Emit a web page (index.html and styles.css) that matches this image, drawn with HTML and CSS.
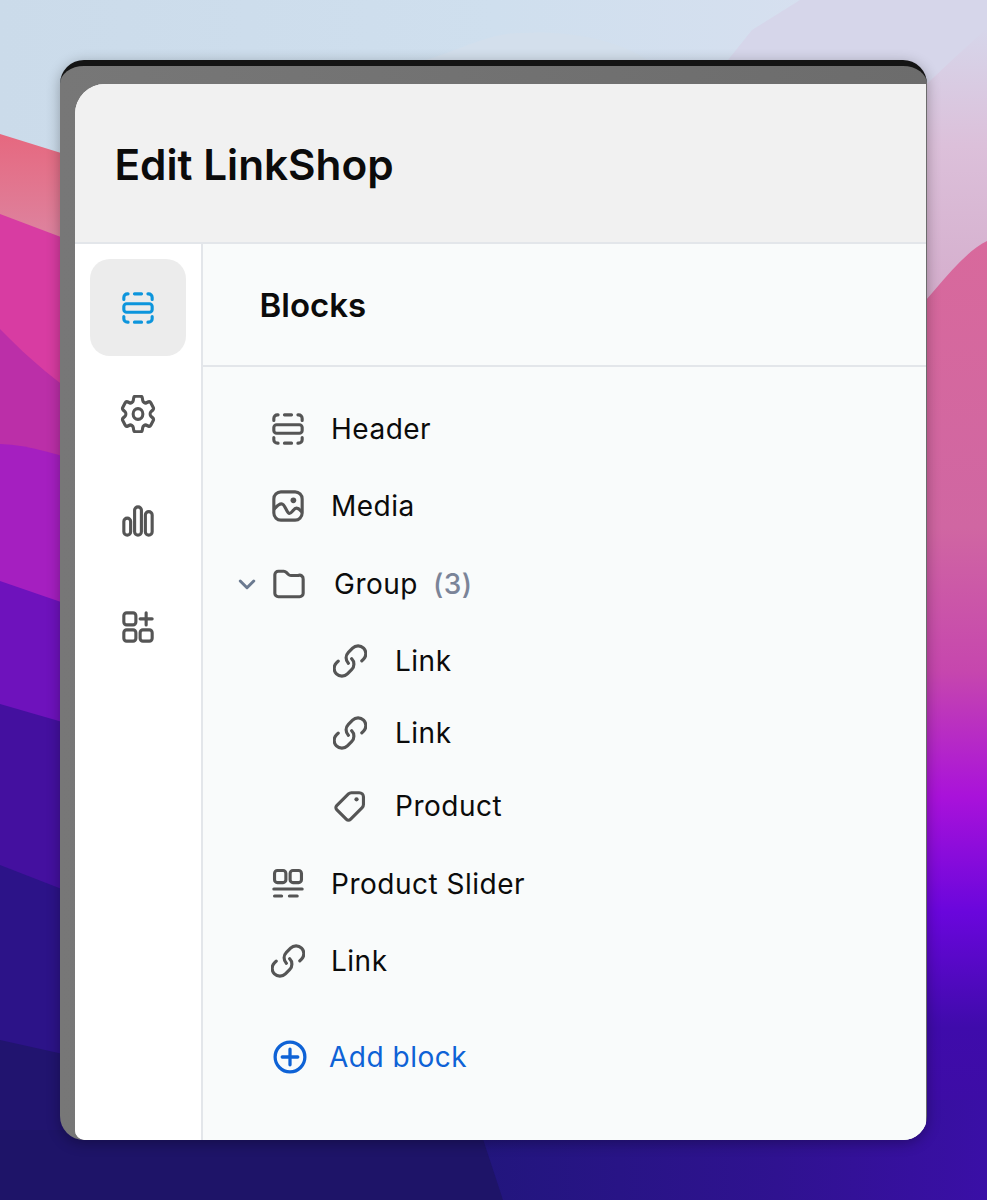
FILE: index.html
```html
<!DOCTYPE html>
<html lang="en">
<head>
  <meta charset="UTF-8" />
  <title>Edit LinkShop</title>
  <link rel="stylesheet" href="styles.css">
</head>
<body>
  <svg class="wallpaper" viewBox="0 0 987 1200" preserveAspectRatio="none" aria-hidden="true">
    <defs>
      <linearGradient id="sky" x1="0" y1="0" x2="1" y2="0">
        <stop offset="0" stop-color="#cbdbea" />
        <stop offset="0.5" stop-color="#cfdfee" />
        <stop offset="1" stop-color="#dae0f0" />
      </linearGradient>
      <linearGradient id="pale" x1="0" y1="0" x2="0" y2="1">
        <stop offset="0" stop-color="#d6d6ea" />
        <stop offset="0.3" stop-color="#dcc0da" />
        <stop offset="1" stop-color="#cf9fc2" />
      </linearGradient>
      <linearGradient id="pink" gradientUnits="userSpaceOnUse" x1="0" y1="240" x2="0" y2="1200">
        <stop offset="0" stop-color="#d8699c" />
        <stop offset="0.3" stop-color="#d066a2" />
        <stop offset="0.45" stop-color="#c646ae" />
        <stop offset="0.58" stop-color="#a912da" />
        <stop offset="0.7" stop-color="#6a06dc" />
        <stop offset="0.82" stop-color="#3f0bab" />
        <stop offset="1" stop-color="#3a0e9e" />
      </linearGradient>
      <linearGradient id="salmon" gradientUnits="userSpaceOnUse" x1="0" y1="134" x2="0" y2="240">
        <stop offset="0" stop-color="#e6687f" />
        <stop offset="1" stop-color="#dd84a0" />
      </linearGradient>
      <linearGradient id="floor" x1="0" y1="0" x2="1" y2="0">
        <stop offset="0" stop-color="#21167c" />
        <stop offset="0.6" stop-color="#2f1290" />
        <stop offset="1" stop-color="#3a0fa6" />
      </linearGradient>
    </defs>
    <rect width="987" height="1200" fill="url(#sky)" />
    <path d="M420 62 C460 50 490 33 520 33 C570 30 620 40 650 62 Z" fill="#d3dfec" />
    <path d="M720 70 L752 30 L800 0 H987 V400 H720 Z" fill="#d6d6ea" />
    <path d="M915 95 L950 62 L987 28 V420 H915 Z" fill="url(#pale)" />
    <path d="M900 330 C930 298 960 254 987 241 V1200 H500 Z" fill="url(#pink)" />
    <path d="M462 1140 L503 1200 H987 V1100 H470 Z" fill="url(#floor)" />

    <path d="M0 134 L90 162 V1200 H0 Z" fill="url(#salmon)" />
    <path d="M0 214 L90 248 V1200 H0 Z" fill="#d83ca2" />
    <path d="M0 329 C30 360 60 385 90 404 V1200 H0 Z" fill="#bb2fa8" />
    <path d="M0 444 C30 445 60 455 90 465 V1200 H0 Z" fill="#a51fc0" />
    <path d="M0 581 L90 612 V1200 H0 Z" fill="#6e12bc" />
    <path d="M0 704 L90 730 V1200 H0 Z" fill="#44109f" />
    <path d="M0 865 L90 900 V1200 H0 Z" fill="#2c1388" />
    <path d="M0 1040 L90 1060 V1200 H0 Z" fill="#21146f" />
    <path d="M0 1130 H480 L503 1200 H0 Z" fill="#1e1468" />
  </svg>

  <div class="window">
    <div class="panel">
      <header class="topbar">
        <h1>Edit LinkShop</h1>
      </header>
      <div class="body">
        <nav class="rail">
          <a class="rail-btn active">
            <svg class="icon" viewBox="0 0 24 24"><use href="#i-header" /></svg>
          </a>
          <a class="rail-btn">
            <svg class="icon gear" viewBox="2 2.400 20 19.200" preserveAspectRatio="none">
              <path d="M9.594 3.940c.09-.542.56-.94 1.110-.94h2.593c.55 0 1.020.398 1.110.94l.213 1.281c.063.374.313.686.645.870.074.040.147.083.22.127.325.196.72.257 1.075.124l1.217-.456a1.125 1.125 0 0 1 1.370.49l1.296 2.247a1.125 1.125 0 0 1-.26 1.431l-1.003.827c-.293.241-.438.613-.43.992a7.723 7.723 0 0 1 0 .255c-.008.378.137.75.43.991l1.004.827c.424.35.534.955.26 1.430l-1.298 2.247a1.125 1.125 0 0 1-1.369.491l-1.217-.456c-.355-.133-.75-.072-1.076.124a6.470 6.470 0 0 1-.22.128c-.331.183-.581.495-.644.869l-.213 1.281c-.09.543-.56.94-1.110.94h-2.594c-.55 0-1.019-.398-1.110-.94l-.213-1.281c-.062-.374-.312-.686-.644-.87a6.520 6.520 0 0 1-.22-.127c-.325-.196-.72-.257-1.076-.124l-1.217.456a1.125 1.125 0 0 1-1.369-.49l-1.297-2.247a1.125 1.125 0 0 1 .26-1.431l1.004-.827c.292-.24.437-.613.43-.991a6.932 6.932 0 0 1 0-.255c.007-.38-.138-.751-.43-.992l-1.004-.827a1.125 1.125 0 0 1-.26-1.430l1.297-2.247a1.125 1.125 0 0 1 1.370-.491l1.216.456c.356.133.751.072 1.076-.124.072-.044.146-.086.22-.128.332-.183.582-.495.644-.869l.214-1.280Z" />
              <circle cx="12" cy="12" r="2.700" />
            </svg>
          </a>
          <a class="rail-btn">
            <svg class="icon" viewBox="0 0 24 24"><use href="#i-bars" /></svg>
          </a>
          <a class="rail-btn">
            <svg class="icon" viewBox="0 0 24 24"><use href="#i-apps" /></svg>
          </a>
        </nav>
        <main class="content">
          <div class="content-head">
            <h2>Blocks</h2>
          </div>
          <ul class="blocks">
            <li class="block">
              <svg class="icon" viewBox="0 0 24 24"><use href="#i-header" /></svg>
              <span>Header</span>
            </li>
            <li class="block">
              <svg class="icon" viewBox="0 0 24 24"><use href="#i-media" /></svg>
              <span>Media</span>
            </li>
            <li class="block group">
              <svg class="chevron" viewBox="0 0 16 16"><path d="M3.500 6 8 10.500 12.500 6" /></svg>
              <svg class="icon" viewBox="0 0 24 24"><use href="#i-folder" /></svg>
              <span>Group</span>
              <span class="count">(3)</span>
            </li>
            <li class="block sub first-sub">
              <svg class="icon" viewBox="0 0 24 24"><use href="#i-link" /></svg>
              <span>Link</span>
            </li>
            <li class="block sub">
              <svg class="icon" viewBox="0 0 24 24"><use href="#i-link" /></svg>
              <span>Link</span>
            </li>
            <li class="block sub">
              <svg class="icon" viewBox="0 0 24 24"><use href="#i-tag" /></svg>
              <span>Product</span>
            </li>
            <li class="block after-sub">
              <svg class="icon" viewBox="0 0 24 24"><use href="#i-slider" /></svg>
              <span>Product Slider</span>
            </li>
            <li class="block">
              <svg class="icon" viewBox="0 0 24 24"><use href="#i-link" /></svg>
              <span>Link</span>
            </li>
          </ul>
          <a class="add-block">
            <svg class="icon" viewBox="0 0 24 24"><circle cx="12" cy="12" r="10.500" /><path d="M12 6.500v11M6.500 12h11" /></svg>
            <span>Add block</span>
          </a>
        </main>
      </div>
    </div>
  </div>

  <svg class="sprite" aria-hidden="true">
    <symbol id="i-header" viewBox="0 0 24 24">
      <rect x="2" y="9" width="20" height="6" rx="2" />
      <path d="M2 6V4.500A2.500 2.500 0 0 1 4.500 2H5M9.500 2h5M19 2h.5A2.500 2.500 0 0 1 22 4.500V6M2 18v1.500A2.500 2.500 0 0 0 4.500 22H5M9.500 22h5M19 22h.5a2.500 2.500 0 0 0 2.500-2.500V18" />
    </symbol>
    <symbol id="i-bars" viewBox="0 0 24 24">
      <rect x="2" y="10" width="4.800" height="12" rx="2.400" />
      <rect x="9.600" y="2" width="4.800" height="20" rx="2.400" />
      <rect x="17.200" y="5.400" width="4.800" height="16.600" rx="2.400" />
    </symbol>
    <symbol id="i-apps" viewBox="0 0 24 24">
      <rect x="2" y="2" width="8.500" height="8.500" rx="2" />
      <rect x="2" y="14" width="8.500" height="8" rx="2" />
      <rect x="13.500" y="14" width="8.500" height="8" rx="2" />
      <path d="M17.750 2v8.500M13.500 6.250H22" />
    </symbol>
    <symbol id="i-media" viewBox="0 0 24 24">
      <rect x="2" y="2" width="20" height="20" rx="5" />
      <path d="M2.500 14c2-2.500 3.500-3.500 5-3.500 2.500 0 3.500 6.700 5.500 6.700 1.700 0 3-3.700 5-3.700 1.500 0 2.500 1.200 3.500 2.500" />
      <circle cx="15.800" cy="8" r="2" class="solid" />
    </symbol>
    <symbol id="i-folder" viewBox="0 0 24 24">
      <path d="M2 5.500A2.500 2.500 0 0 1 4.500 3h3.800c.7 0 1.300.3 1.800.8l1.500 1.500c.5.500 1.100.7 1.800.7h5.100A2.500 2.500 0 0 1 22 8.500v10a2.500 2.500 0 0 1-2.500 2.500h-15A2.500 2.500 0 0 1 2 18.500z" />
    </symbol>
    <symbol id="i-link" viewBox="0 0 24 24">
      <g class="scaled" transform="translate(12 12) scale(1.14) translate(-12 -12)">
        <path d="M19.300 11.900l1.100-1.100a4.800 4.800 0 0 0-6.800-6.800L11 6.600a4.800 4.800 0 0 0 0 6.800" />
        <path d="M4.700 12.100l-1.100 1.100a4.800 4.800 0 0 0 6.800 6.800l2.600-2.600a4.800 4.800 0 0 0 0-6.800" />
      </g>
    </symbol>
    <symbol id="i-tag" viewBox="0 0 24 24">
      <path d="M13 2.600h5.500a3 3 0 0 1 3 3V11c0 .8-.3 1.500-.9 2.100l-8.300 8.300a2 2 0 0 1-2.800 0l-6.900-6.900a2 2 0 0 1 0-2.800l8.300-8.200c.6-.6 1.300-.9 2.100-.9z" />
      <circle cx="16.600" cy="7.300" r="1.500" class="solid" />
    </symbol>
    <symbol id="i-slider" viewBox="0 0 24 24">
      <rect x="2.500" y="2.500" width="8" height="8.500" rx="2" />
      <rect x="13.500" y="2.500" width="8" height="8.500" rx="2" />
      <path d="M2 15.500h20M2.500 20.500h5M13 20.500h5.500" />
    </symbol>
  </svg>
</body>
</html>
```

FILE: styles.css
```css
* { box-sizing: border-box; }
html, body { margin: 0; height: 1200px; }
body { font-family: Inter, "Liberation Sans", sans-serif; color: #0b0b0b; padding: 60px; overflow: hidden; position: relative; }

.wallpaper { position: absolute; top: 0; left: 0; width: 987px; height: 1200px; }
.sprite { display: none; }

.window {
  position: relative;
  height: 1080px;
  background: linear-gradient(to right, #777 0, #6c6c6c 100%);
  border-top: 6px solid #141414;
  border-radius: 24px;
  padding: 18px 1px 0 15px;
  overflow: hidden;
  box-shadow: 0 3px 14px rgba(0,0,0,0.3);
}
.panel { height: 100%; background: #fff; border-top-left-radius: 30px; border-bottom-left-radius: 10px; overflow: hidden; display: flex; flex-direction: column; }

.topbar { height: 160px; flex: none; background: #f1f1f1; border-bottom: 2px solid #e3e6ea; padding: 3px 0 0 39.5px; display: flex; align-items: center; }
.topbar h1 { margin: 0; font-size: 42.3px; font-weight: 600; letter-spacing: 0; }

.body { flex: 1; display: flex; min-height: 0; }

.rail { width: 128px; flex: none; background: #fff; border-right: 2px solid #e3e6ea; padding: 15px 15px 0; display: flex; flex-direction: column; gap: 9.5px; }
.rail-btn { height: 97px; border-radius: 20px; display: flex; align-items: center; justify-content: center; }
.rail-btn.active { background: #ececec; }
.rail-btn.active .icon { color: #0d95dc; }

.icon { width: 34px; height: 34px; flex: none; color: #555; fill: none; stroke: currentColor; stroke-width: 2.2; stroke-linecap: round; stroke-linejoin: round; }
.icon.gear { width: 36px; height: 38px; stroke-width: 1.7; }
.solid { fill: currentColor; stroke: none; }
.scaled { stroke-width: 1.95; }

.content { flex: 1; background: #f9fbfb; }
.content-head { height: 123px; border-bottom: 2px solid #e3e6ea; padding: 1px 0 0 56.5px; display: flex; align-items: center; }
.content-head h2 { margin: 0; font-size: 33px; font-weight: 600; letter-spacing: 0; }

.blocks { list-style: none; margin: 0; padding: 23px 0 0 68px; }
.block { height: 77.5px; display: flex; align-items: center; gap: 26px; font-size: 28px; letter-spacing: 0.5px; }
.block.group { margin-left: -36px; gap: 0; }
.block.group .icon { margin: 0 28px 0 13px; }
.block.group .count { margin-left: 15px; color: #7b8498; font-weight: 500; }
.chevron { width: 24px; height: 24px; flex: none; fill: none; stroke: #6b7a90; stroke-width: 2; stroke-linecap: round; stroke-linejoin: round; }
.block.sub { height: 72.5px; padding-left: 62px; gap: 28px; }
.block.first-sub { margin-top: 2px; }
.block.after-sub { margin-top: 3px; }

.add-block { display: flex; align-items: center; gap: 22px; margin: 26.5px 0 0 70px; color: #0e62d6; font-size: 28px; letter-spacing: 0.5px; height: 60px; }
.add-block .icon { color: #0e62d6; stroke-width: 2.3; }
```
